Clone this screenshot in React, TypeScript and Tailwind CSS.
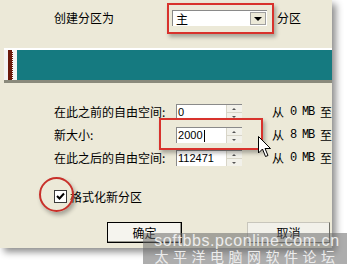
import type { ReactNode } from "react";

const cjk = "font-['SimSun','Noto_Sans_CJK_SC',sans-serif]";

// Champ numérique avec ses flèches haut/bas, façon Windows XP.
function Spin({ value, caret }: { value: string; caret?: boolean }) {
  return (
    <div className="flex h-[16px] w-[68px] items-stretch border-l border-t border-[#8a8a8a] border-r-white border-b-white bg-white">
      <div className="flex flex-1 items-center pl-[1px] font-['Liberation_Sans',sans-serif] text-[11px] leading-none text-black">
        {value}
        {caret && <span className="ml-[1px] h-[12px] w-px bg-black" />}
      </div>
      <div className="flex w-[16px] flex-col border-l border-[#d8d5c8]">
        <div className="flex flex-1 items-center justify-center border-b border-[#d8d5c8] bg-[#f2f1ea]">
          <span className="h-0 w-0 border-x-[2px] border-b-[2px] border-x-transparent border-b-[#555]" />
        </div>
        <div className="flex flex-1 items-center justify-center bg-[#f2f1ea]">
          <span className="h-0 w-0 border-x-[2px] border-t-[2px] border-x-transparent border-t-[#555]" />
        </div>
      </div>
    </div>
  );
}

function Row({ label, children, range }: { label: string; children: ReactNode; range: string }) {
  return (
    <div className="flex h-[16px] items-center">
      <span className="w-[126px] text-[12px] leading-none">{label}</span>
      {children}
      <span className="ml-[30px] flex items-center whitespace-nowrap text-[12px] leading-none">
        从<span className="whitespace-pre font-['Liberation_Mono',monospace] text-[12px] tracking-[-1.2px]"> {range} MB </span>至
      </span>
    </div>
  );
}

export default function App() {
  return (
    <div className={`relative h-[264px] w-[347px] overflow-hidden bg-white text-black ${cjk}`}>
      {/* La boîte de dialogue, coupée en haut et à gauche. */}
      <div className="h-[248px] w-[332px] overflow-hidden bg-[#ECE9D8] shadow-[4px_4px_7px_rgba(0,0,0,0.45)]">
        <div className="flex items-center pt-[10px] pl-[54px]">
          <span className="w-[118px] text-[12px] leading-none">创建分区为</span>
          <div className="flex h-[16px] w-[95px] items-stretch border-l border-t border-[#8a8a8a] border-r-white border-b-white bg-white">
            <span className="flex flex-1 items-center pl-[3px] text-[12px] leading-none">主</span>
            <span className="m-[1px] flex w-[16px] items-center justify-center border border-[#a0a0a0] bg-[#ECE9D8]">
              <span className="h-0 w-0 border-x-[4px] border-t-[4px] border-x-transparent border-t-black" />
            </span>
          </div>
          <span className="ml-[10px] text-[12px] leading-none">分区</span>
        </div>

        {/* Carte des partitions */}
        <div className="mt-[22px] ml-[4px] flex h-[35px] flex-col">
          <div className="h-[2px] bg-white" />
          <div className="flex flex-1">
            <div className="flex w-[13px] border-x-2 border-[#f4f4f4] bg-[#f4f4f4] px-[2px]">
              <div className="flex-1 border-r border-dotted border-white bg-[#6b1a0c]" />
            </div>
            <div className="flex-1 bg-[#157A80]" />
          </div>
          <div className="h-[3px] bg-[#8a8a7c]" />
        </div>

        <div className="mt-[21px] flex flex-col gap-[7px] pl-[54px]">
          <Row label="在此之前的自由空间:" range="0">
            <Spin value="0" />
          </Row>
          <Row label="新大小:" range="8">
            <Spin value="2000" caret />
          </Row>
          <Row label="在此之后的自由空间:" range="0">
            <Spin value="112471" />
          </Row>
        </div>

        <label className="mt-[24px] ml-[54px] flex items-center gap-[3px]">
          <span className="flex h-[13px] w-[13px] items-center justify-center border border-[#3a3a3a] bg-white">
            <svg width="9" height="9" viewBox="0 0 9 9">
              <path d="M1 4 L3.5 6.5 L8 1.5" fill="none" stroke="#000" strokeWidth="2" />
            </svg>
          </span>
          <span className="text-[12px] leading-none">格式化新分区</span>
        </label>

        <div className="mt-[19px] flex pl-[107px]">
          <button className="flex h-[21px] w-[75px] items-center justify-center border border-black bg-[#F5F4EE] text-[12px] leading-none shadow-[inset_-1px_-1px_0_#9a9a90]">
            确定
          </button>
          <button className="ml-[65px] flex h-[21px] w-[83px] items-center justify-center border border-[#c8c6bc] border-r-[#6e6e66] border-b-[#6e6e66] bg-[#F2F1EA] text-[12px] leading-none">
            取消
          </button>
        </div>
      </div>

      {/* Annotations rouges */}
      <div className="absolute left-[167px] top-[3px] h-[31px] w-[107px] border-2 border-[#d8322c] shadow-[2px_3px_4px_rgba(0,0,0,0.3)]" />
      <div className="absolute left-[159px] top-[118px] h-[32px] w-[104px] border-2 border-[#d8322c] shadow-[2px_3px_4px_rgba(0,0,0,0.3)]" />
      <div className="absolute left-[39px] top-[177px] h-[35px] w-[35px] rounded-full border-2 border-[#c8302a] shadow-[2px_3px_4px_rgba(0,0,0,0.3)]" />

      {/* Pointeur de la souris */}
      <svg className="absolute left-[258px] top-[136px]" width="13" height="22" viewBox="0 0 13 22">
        <path d="M0.5 0.5 L0.5 17 L4.5 13 L7.5 20.5 L10 19.5 L7 12.5 L12.5 12.5 Z" fill="#fff" stroke="#000" strokeWidth="1" />
      </svg>

      {/* Filigrane */}
      <div className="absolute bottom-0 right-0 flex h-[31px] w-[204px] flex-col items-center bg-[rgba(105,105,105,0.55)] pl-[4px] text-[#ececec]">
        <span className="font-['Liberation_Sans',sans-serif] text-[16px] leading-[15px] tracking-[0.6px]">softbbs.pconline.com.cn</span>
        <span className="text-[14px] leading-[16px] tracking-[4.5px]">太平洋电脑网软件论坛</span>
      </div>
    </div>
  );
}
